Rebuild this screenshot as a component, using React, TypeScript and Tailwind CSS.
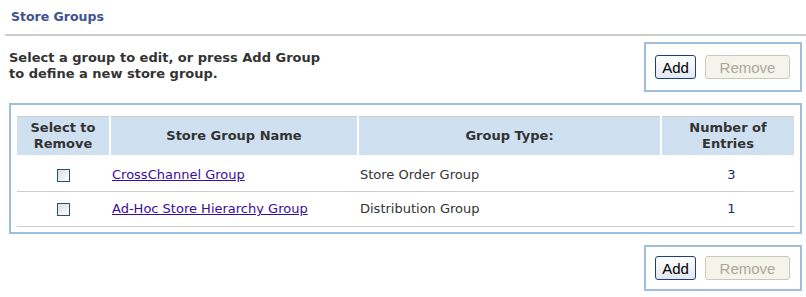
import React from 'react';

const font = { fontFamily: '"DejaVu Sans", Verdana, sans-serif' };

const groups = [
  { name: 'CrossChannel Group', type: 'Store Order Group', entries: 3 },
  { name: 'Ad-Hoc Store Hierarchy Group', type: 'Distribution Group', entries: 1 },
];

const ButtonBox: React.FC<{ className?: string }> = ({ className = '' }) => (
  <div className={`ml-auto mr-[4px] flex w-[158px] items-center justify-end gap-[9px] border-2 border-[#9dbfdc] pr-[10px] ${className}`}>
    <button
      className="h-[24px] w-[41px] rounded-[3px] border border-[#1c3f7f] bg-gradient-to-b from-white to-[#e3e8f0] text-[15px] leading-none text-black"
      style={{ fontFamily: '"Liberation Sans", Arial, sans-serif' }}
    >
      Add
    </button>
    <button
      disabled
      className="h-[24px] w-[85px] rounded-[3px] border border-[#cac8bb] bg-[#f5f4ea] text-[15px] leading-none text-[#aca899]"
      style={{ fontFamily: '"Liberation Sans", Arial, sans-serif' }}
    >
      Remove
    </button>
  </div>
);

const Checkbox = () => (
  <span className="inline-block h-[13px] w-[13px] border border-[#1c5180] bg-gradient-to-br from-[#dcdcd7] to-white align-middle" />
);

export default function App() {
  return (
    <div className="h-[297px] w-[806px] overflow-hidden bg-white text-[#333]" style={font}>
      {/* title */}
      <div className="pl-[11px] pt-[9px] text-[12.5px] font-bold leading-[16px] text-[#3d5290]">Store Groups</div>
      <div className="ml-[5px] mt-[9px] border-t-2 border-[#cccccc]" />

      {/* intro + top buttons */}
      <div className="flex pt-[6px]">
        <p className="pl-[9px] pt-[8px] text-[13px] font-bold leading-[16px] text-[#333]">
          Select a group to edit, or press Add Group
          <br />
          to define a new store group.
        </p>
        <ButtonBox className="h-[50px]" />
      </div>

      {/* table */}
      <div className="ml-[9px] mt-[11px] w-[793px] border-2 border-[#9dbfdc] px-[6px] pb-[5px] pt-[11px]">
        <table className="w-full border-collapse text-[13px]">
          <thead>
            <tr className="border-t border-b-[3px] border-t-[#cccccc] border-b-white bg-[#cfe0f0] font-bold text-[#333] shadow-[0_1px_0_#cccccc]">
              <th className="w-[93px] border-r-2 border-white py-[3px] leading-[16px]">Select to<br />Remove</th>
              <th className="w-[248px] border-r-2 border-white leading-[16px]">Store Group Name</th>
              <th className="w-[303px] border-r-2 border-white leading-[16px]">Group Type:</th>
              <th className="leading-[16px]">Number of<br />Entries</th>
            </tr>
          </thead>
          <tbody>
            {groups.map((g) => (
              <tr key={g.name} className="h-[35px] border-b border-[#cccccc]">
                <td className="text-center">
                  <Checkbox />
                </td>
                <td className="pl-[2px]">
                  <a href="#" className="text-[#3a0c9c] underline">
                    {g.name}
                  </a>
                </td>
                <td className="pl-[2px] text-[#333]">{g.type}</td>
                <td className="pl-[8px] text-center text-[#1f2a6b]">{g.entries}</td>
              </tr>
            ))}
          </tbody>
        </table>
      </div>

      {/* bottom buttons */}
      <div className="flex pt-[11px]">
        <ButtonBox className="h-[46px]" />
      </div>
    </div>
  );
}
